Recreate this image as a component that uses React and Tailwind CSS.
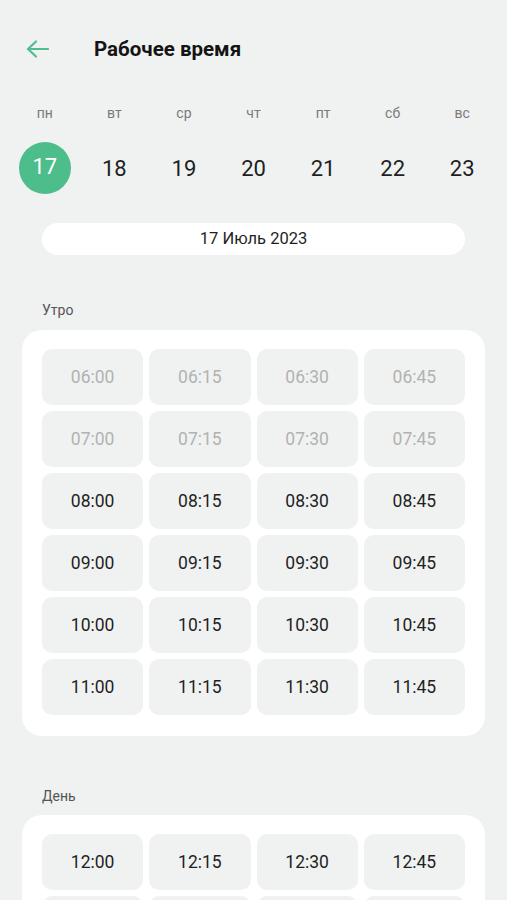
import React from "react";

const days = [
  ["пн", 17],
  ["вт", 18],
  ["ср", 19],
  ["чт", 20],
  ["пт", 21],
  ["сб", 22],
  ["вс", 23],
];

const morning = [
  ["06:00", "06:15", "06:30", "06:45"],
  ["07:00", "07:15", "07:30", "07:45"],
  ["08:00", "08:15", "08:30", "08:45"],
  ["09:00", "09:15", "09:30", "09:45"],
  ["10:00", "10:15", "10:30", "10:45"],
  ["11:00", "11:15", "11:30", "11:45"],
];

const day = [
  ["12:00", "12:15", "12:30", "12:45"],
  ["13:00", "13:15", "13:30", "13:45"],
];

function Slot({ t, disabled }) {
  return (
    <div
      className={
        "h-[56px] rounded-[10px] bg-[#f0f2f1] flex items-center justify-center text-[17.5px] " +
        (disabled ? "text-[#b0b3b2]" : "text-[#1f1f1f]")
      }
    >
      {t}
    </div>
  );
}

function Card({ rows, disabledRows = 0 }) {
  return (
    <div className="mx-[22px] rounded-[20px] bg-white px-[20px] pt-[19px] pb-[21px] grid grid-cols-4 gap-[6px]">
      {rows.map((r, i) =>
        r.map((t) => <Slot key={t} t={t} disabled={i < disabledRows} />)
      )}
    </div>
  );
}

export default function App() {
  return (
    <div
      className="w-[507px] h-[900px] overflow-hidden bg-[#eff2f1]"
      style={{ fontFamily: "Roboto, 'Noto Sans', sans-serif" }}
    >
      <div className="pt-[21px] h-[77px] flex items-center px-[26px]">
        <svg width="23" height="18" viewBox="0 0 23 18" fill="none" className="mt-[-1px]">
          <path
            d="M22 9H2M10 1.5L2 9l8 7.5"
            stroke="#4cbf8f"
            strokeWidth="2.2"
            strokeLinecap="round"
            strokeLinejoin="round"
          />
        </svg>
        <div className="ml-[45px] text-[20.5px] font-bold text-[#141414] leading-none">
          Рабочее время
        </div>
      </div>

      <div className="mt-[26px] px-[10px] grid grid-cols-7">
        {days.map(([d]) => (
          <div key={d} className="text-center text-[14px] leading-[20px] text-[#7a7a7a]">
            {d}
          </div>
        ))}
      </div>

      <div className="mt-[19px] px-[10px] grid grid-cols-7">
        {days.map(([d, n], i) => (
          <div key={d} className="flex justify-center">
            {i === 0 ? (
              <div className="w-[52px] h-[52px] rounded-full bg-[#4dbd8c] flex items-center justify-center text-white text-[22px] pb-[4px]">
                {n}
              </div>
            ) : (
              <div className="h-[52px] flex items-center justify-center text-[22px] text-[#1f1f1f]">
                {n}
              </div>
            )}
          </div>
        ))}
      </div>

      <div className="mt-[29px] mx-[42px] h-[32px] rounded-full bg-white flex items-center justify-center text-[16.5px] text-[#1f1f1f]">
        17 Июль 2023
      </div>

      <div className="mt-[46px] px-[42px] text-[14px] leading-[18px] text-[#555]">Утро</div>
      <div className="mt-[11px]">
        <Card rows={morning} disabledRows={2} />
      </div>

      <div className="mt-[51px] px-[42px] text-[14px] leading-[18px] text-[#555]">День</div>
      <div className="mt-[10px]">
        <Card rows={day} />
      </div>
    </div>
  );
}
